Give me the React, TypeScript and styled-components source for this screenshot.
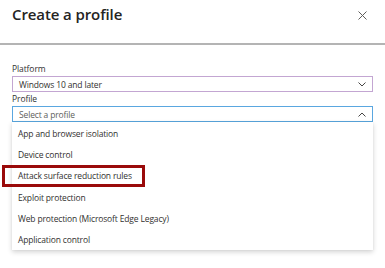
import React from 'react';
import styled, { createGlobalStyle } from 'styled-components';

const GlobalStyle = createGlobalStyle`
  html, body {
    margin: 0;
    padding: 0;
    background: #ffffff;
  }
  body {
    font-family: "Open Sans", "Noto Sans", "Liberation Sans", sans-serif;
    color: #323130;
  }
`;

const Panel = styled.div`
  width: 385px;
  height: 268px;
  background: #ffffff;
  overflow: hidden;
  display: flex;
  flex-direction: column;
`;

const Header = styled.div`
  height: 45px;
  display: flex;
  align-items: flex-start;
  justify-content: space-between;
  padding: 4px 18px 0 12px;
  box-sizing: border-box;
  border-bottom: 2px solid #b4b4b4;
`;

const Title = styled.h1`
  margin: 0;
  font-size: 15px;
  font-weight: 600;
  color: #252423;
  letter-spacing: -0.1px;
`;

const CloseButton = styled.button`
  border: none;
  background: none;
  padding: 0;
  margin-top: 7px;
  width: 9px;
  height: 9px;
  display: flex;
  cursor: pointer;
`;

const Form = styled.div`
  padding: 18px 12px 0 12px;
  display: flex;
  flex-direction: column;
`;

const Label = styled.div`
  font-size: 8.5px;
  letter-spacing: -0.1px;
  color: #323130;
  line-height: 12px;
  margin-bottom: 1px;
`;

const Select = styled.div<{ $accent: string }>`
  height: 16px;
  box-sizing: border-box;
  border: 1px solid ${({ $accent }) => $accent};
  display: flex;
  align-items: center;
  justify-content: space-between;
  padding: 0 6px 0 6px;
  margin-bottom: 1px;
`;

const SelectText = styled.span<{ $placeholder?: boolean }>`
  font-size: 8.5px;
  letter-spacing: -0.15px;
  color: ${({ $placeholder }) => ($placeholder ? '#605e5c' : '#323130')};
`;

const Dropdown = styled.div`
  margin-top: -1px;
  padding: 1px 0 0 0;
  background: #ffffff;
  box-shadow: 0 2px 5px rgba(0, 0, 0, 0.18), 0 0 1px rgba(0, 0, 0, 0.08);
  display: flex;
  flex-direction: column;
`;

const Option = styled.div`
  position: relative;
  height: 21.2px;
  display: flex;
  align-items: center;
  padding-left: 6px;
  font-size: 8.5px;
  letter-spacing: -0.15px;
  color: #323130;
`;

const Highlight = styled.div`
  position: absolute;
  left: -10px;
  top: 0;
  width: 143px;
  height: 22px;
  box-sizing: border-box;
  border: 3px solid #9a0a0a;
`;

const Chevron = ({ up }: { up?: boolean }) => (
  <svg width="8" height="5" viewBox="0 0 8 5">
    <path
      d={up ? 'M0.5 4.5 L4 1 L7.5 4.5' : 'M0.5 0.5 L4 4 L7.5 0.5'}
      fill="none"
      stroke="#323130"
      strokeWidth="0.9"
    />
  </svg>
);

const options = [
  'App and browser isolation',
  'Device control',
  'Attack surface reduction rules',
  'Exploit protection',
  'Web protection (Microsoft Edge Legacy)',
  'Application control',
];

export default function App() {
  return (
    <Panel>
      <GlobalStyle />
      <Header>
        <Title>Create a profile</Title>
        <CloseButton aria-label="Close">
          <svg width="9" height="9" viewBox="0 0 9 9">
            <path d="M0.5 0.5 L8.5 8.5 M8.5 0.5 L0.5 8.5" stroke="#605e5c" strokeWidth="1" />
          </svg>
        </CloseButton>
      </Header>
      <Form>
        <Label>Platform</Label>
        <Select $accent="#c3a6d2">
          <SelectText>Windows 10 and later</SelectText>
          <Chevron />
        </Select>
        <Label>Profile</Label>
        <Select $accent="#5aa7e0">
          <SelectText $placeholder>Select a profile</SelectText>
          <Chevron up />
        </Select>
        <Dropdown>
          {options.map((o, i) => (
            <Option key={o}>
              {i === 2 && <Highlight />}
              {o}
            </Option>
          ))}
        </Dropdown>
      </Form>
    </Panel>
  );
}
